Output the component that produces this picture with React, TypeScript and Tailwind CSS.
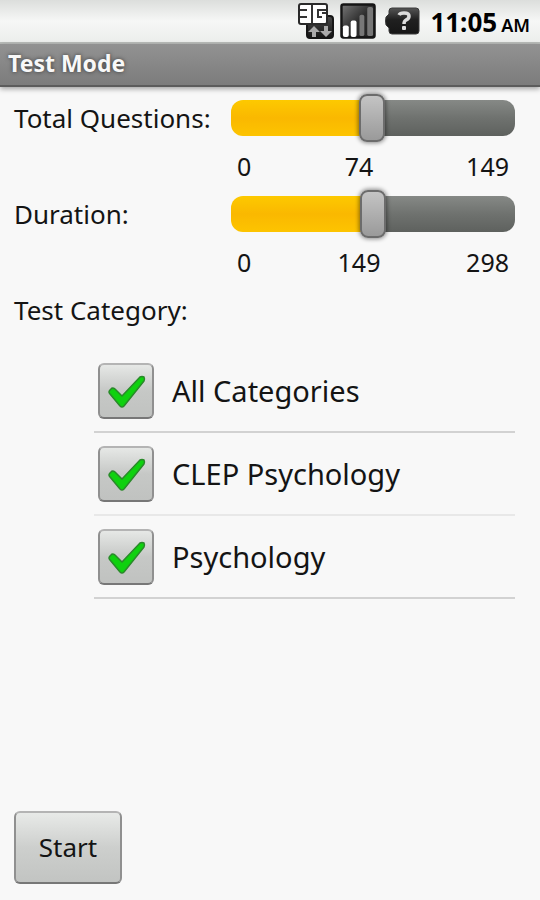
import { useState, type CSSProperties } from 'react';

function NetworkIcon() {
  return (
    <svg width="38" height="38" viewBox="0 0 38 38" aria-hidden="true">
      <defs>
        <linearGradient id="net" x1="0" y1="0" x2="0" y2="1">
          <stop offset="0" stopColor="#4a4a4a" />
          <stop offset="1" stopColor="#151515" />
        </linearGradient>
      </defs>
      <rect x="9" y="14" width="26" height="22" rx="3" fill="url(#net)" stroke="#161616" strokeWidth="2" />
      <rect x="0" y="1" width="30" height="22" rx="3" fill="#2a2a2a" />
      <rect x="2" y="3" width="26" height="18" rx="1" fill="#fff" />
      <path d="M2 8H9M2 15H9M14 3V21M28 8H20V15H24M24 11H28" fill="none" stroke="#333" strokeWidth="2" />
      <path d="M10 30L16 24L22 30H18V35H14V30Z" fill="#aaa" />
      <path d="M22 29H26V24H30V29H34L28 35Z" fill="#aaa" />
    </svg>
  );
}

function SignalIcon() {
  return (
    <svg width="36" height="36" viewBox="0 0 37 37" aria-hidden="true">
      <defs>
        <linearGradient id="sig" x1="0" y1="0" x2="1" y2="1">
          <stop offset="0" stopColor="#777" />
          <stop offset="0.5" stopColor="#2e2e2e" />
          <stop offset="1" stopColor="#222" />
        </linearGradient>
      </defs>
      <rect x="1.500" y="1.500" width="34" height="34" rx="2" fill="url(#sig)" stroke="#151515" strokeWidth="2.500" />
      <rect x="3" y="23" width="6" height="12" rx="2" fill="#fff" />
      <rect x="11" y="18" width="6" height="17" rx="2" fill="#fff" />
      <rect x="20" y="12" width="5" height="22" rx="2" fill="#777" />
      <rect x="28" y="4" width="6" height="30" rx="2" fill="#777" />
    </svg>
  );
}

function BatteryIcon() {
  return (
    <svg width="36" height="28" viewBox="0 0 36 28" aria-hidden="true">
      <defs>
        <linearGradient id="bat" x1="0" y1="0" x2="0" y2="1">
          <stop offset="0" stopColor="#555" />
          <stop offset="0.450" stopColor="#202020" />
          <stop offset="1" stopColor="#161616" />
        </linearGradient>
      </defs>
      <path
        d="M8 1H32Q35 1 35 4V24Q35 27 32 27H8Q5 27 5 24V21L2 18Q1 14 2 10L5 7V4Q5 1 8 1Z"
        fill="url(#bat)"
        stroke="#3a3a3a"
        strokeWidth="1"
      />
      <path d="M15 8Q16 6 20 6Q25 6 25 9Q25 12 22 13Q20 14 20 17" fill="none" stroke="#dcdcdc" strokeWidth="3.500" />
      <rect x="18" y="19" width="4" height="4" rx="1" fill="#dcdcdc" />
    </svg>
  );
}

function StatusBar() {
  return (
    <header className="flex h-11 items-center justify-end border-b-2 border-[#b9bcb9] bg-linear-to-b from-[#dcdedc] via-[#f6f7f6] to-[#eceeec] pr-2.5">
      <NetworkIcon />
      <span className="ml-1"><SignalIcon /></span>
      <span className="ml-2"><BatteryIcon /></span>
      <span className="ml-2.5 flex items-baseline gap-1 pt-0.5 text-black">
        <span className="text-[26px] leading-9 font-bold">11:05</span>
        <span className="text-lg font-semibold">AM</span>
      </span>
    </header>
  );
}

type SliderProps = { id: string; label: string; max: number; initial: number };

function SliderRow({ id, label, max, initial }: SliderProps) {
  const [value, setValue] = useState(initial);
  const fill = { '--fill': `${(value / max) * 100}%` } as CSSProperties;
  return (
    <div className="flex">
      <label htmlFor={id} className="flex h-12 w-[217px] shrink-0 items-center">
        {label}
      </label>
      <div className="min-w-0 flex-1">
        <input
          id={id}
          type="range"
          min={0}
          max={max}
          value={value}
          onChange={(e) => setValue(Number(e.target.value))}
          style={fill}
          className="block h-12 w-full appearance-none bg-transparent outline-none [&::-webkit-slider-runnable-track]:h-9 [&::-webkit-slider-runnable-track]:rounded-xl [&::-webkit-slider-runnable-track]:bg-[linear-gradient(to_bottom,#fdc900,#fab800_50%,#fdc400),linear-gradient(to_bottom,#868986,#6f726f_50%,#5e615e)] [&::-webkit-slider-runnable-track]:bg-[length:var(--fill)_100%,100%_100%] [&::-webkit-slider-runnable-track]:bg-no-repeat [&::-webkit-slider-thumb]:-mt-1.5 [&::-webkit-slider-thumb]:h-12 [&::-webkit-slider-thumb]:w-[26px] [&::-webkit-slider-thumb]:appearance-none [&::-webkit-slider-thumb]:rounded-lg [&::-webkit-slider-thumb]:border-2 [&::-webkit-slider-thumb]:border-[#6c6c6c] [&::-webkit-slider-thumb]:bg-linear-to-b [&::-webkit-slider-thumb]:from-[#c4c4c4] [&::-webkit-slider-thumb]:to-[#9a9a9a] [&::-webkit-slider-thumb]:shadow-[0_0_4px_1px_rgba(0,0,0,0.45)]"
        />
        <div className="grid h-12 grid-cols-3 items-center px-1.5 pt-0.5 text-[25px]">
          <span>0</span>
          <span className="pr-7 text-center">{value}</span>
          <span className="text-right">{max}</span>
        </div>
      </div>
    </div>
  );
}

function CategoryRow({ name, line }: { name: string; line: string }) {
  const [checked, setChecked] = useState(true);
  return (
    <li className={`border-b-2 ${line}`}>
      <label className="flex h-[81px] items-center gap-[18px] px-1 text-[29px]">
        <span className="grid size-14 shrink-0 place-items-center">
          <input
            type="checkbox"
            checked={checked}
            onChange={(e) => setChecked(e.target.checked)}
            className="peer col-start-1 row-start-1 size-14 appearance-none rounded-md border-2 border-t-[#b4b4b4] border-r-[#909090] border-b-[#777] border-l-[#909090] bg-linear-to-b from-[#e6e8e6] via-[#c6c8c6] to-[#c0c2c0]"
          />
          <svg
            width="40"
            height="36"
            viewBox="0 0 40 36"
            aria-hidden="true"
            className="pointer-events-none invisible col-start-1 row-start-1 peer-checked:visible"
          >
            <path
              d="M3 19Q3 18 4 17L6 15Q8 15 9 16L16 23L34 4Q36 3 38 4Q39 6 38 8L18 33Q16 35 14 33L4 21Q3 20 3 19Z"
              fill="#0fd10f"
              stroke="#2a8a2a"
              strokeWidth="1.500"
              strokeLinejoin="round"
            />
          </svg>
        </span>
        {name}
      </label>
    </li>
  );
}

export default function App() {
  return (
    <div className="flex min-h-screen flex-col bg-[#f8f8f8] font-['Noto_Sans','Open_Sans',sans-serif] text-[#141414]">
      <StatusBar />
      <h1 className="flex h-[43px] items-center border-b-2 border-[#5c5c5c] bg-linear-to-b from-[#929292] to-[#7c7c7c] px-2 pb-0.5 text-[23px] font-bold text-[#f8f8f8] shadow-[0_2px_5px_rgba(0,0,0,0.35)] [text-shadow:0_0_4px_rgba(0,0,0,0.6)]">
        Test Mode
      </h1>
      <main className="flex flex-1 flex-col pt-[7px] pr-[25px] pb-4 pl-3.5 text-[26px]">
        <SliderRow id="questions" label="Total Questions:" max={149} initial={74} />
        <SliderRow id="duration" label="Duration:" max={298} initial={149} />
        <h2 className="flex h-12 items-center">Test Category:</h2>
        <ul className="mt-4 pl-20">
          <CategoryRow name="All Categories" line="border-[#d2d2d2]" />
          <CategoryRow name="CLEP Psychology" line="border-[#e8e8e8]" />
          <CategoryRow name="Psychology" line="border-[#d2d2d2]" />
        </ul>
        <button
          type="button"
          className="mt-auto h-[73px] w-[108px] rounded-md border-2 border-t-[#b4b4b4] border-r-[#909090] border-b-[#777] border-l-[#909090] bg-linear-to-b from-[#e8eae8] via-[#cdcfcd] to-[#c2c4c2]"
        >
          Start
        </button>
      </main>
    </div>
  );
}
